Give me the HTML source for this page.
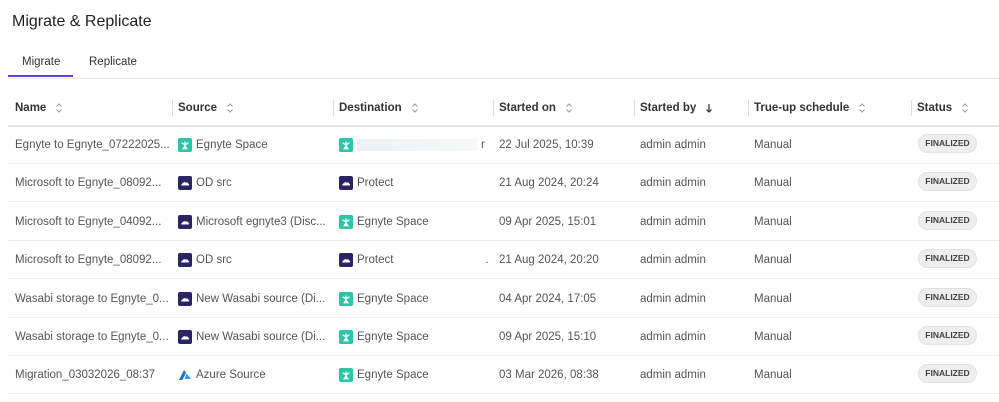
<!DOCTYPE html>
<html><head><meta charset="utf-8"><style>
*{margin:0;padding:0;box-sizing:border-box}
body{width:999px;height:402px;background:#fff;font-family:"Liberation Sans",sans-serif;color:#555;position:relative;overflow:hidden}
.abs{position:absolute}
h1{position:absolute;left:12px;top:13px;font-size:16px;font-weight:normal;color:#222}
.tab{position:absolute;top:55px;font-size:11.5px;color:#333;line-height:14px}
.th{position:absolute;top:101px;font-size:11.5px;font-weight:bold;color:#333;white-space:nowrap;line-height:14px}
.sep{position:absolute;top:100px;width:1px;height:16px;background:#ddd}
.cell{position:absolute;font-size:11.5px;color:#555;white-space:nowrap;line-height:14px;height:14px}
.ic{display:inline-block;width:14px;height:14px;border-radius:2px;vertical-align:top;margin-right:4px;position:relative}
.eg{background:#2ec4a6}
.ms{background:#2a2462}
.badge{position:absolute;left:918px;width:59px;height:19px;border-radius:10px;background:#eee;border:1px solid #e2e2e2;font-size:8.5px;font-weight:bold;color:#444;text-align:center;line-height:17px}
.line{position:absolute;left:8px;right:0;height:1px;background:#eee}
.srt{display:inline-block;vertical-align:top;margin-left:9px}
</style></head><body>
<h1>Migrate &amp; Replicate</h1>
<div class="tab" style="left:22px">Migrate</div>
<div class="tab" style="left:89px">Replicate</div>
<div class="abs" style="left:8px;top:75px;width:65px;height:2px;background:#6a3fd0"></div>
<div class="abs" style="left:8px;right:0;top:78px;height:1px;background:#e8e8e8"></div>
<div id="hd"></div>
<div class="abs" style="left:8px;right:0;top:125px;height:2px;background:#e4e4e4"></div>
<div id="rows"></div>
<script>
var S='<svg class="srt" width="8" height="14" viewBox="0 0 8 14"><path d="M1.5 5.5L4 3l2.5 2.5M1.5 8.5L4 11l2.5-2.5" stroke="#999" stroke-width="1" fill="none"/></svg>';
var D='<svg class="srt" width="8" height="14" viewBox="0 0 8 14"><path d="M4 3v8M1.5 8.5L4 11l2.5-2.5" stroke="#333" stroke-width="1.2" fill="none"/></svg>';
var H=[[15,"Name",S],[178,"Source",S],[339,"Destination",S],[499,"Started on",S],[640,"Started by",D],[754,"True-up schedule",S],[917,"Status",S]];
var hh='';H.forEach(function(x,i){if(i)hh+='<div class="sep" style="left:'+(x[0]-6)+'px"></div>';hh+='<div class="th" style="left:'+x[0]+'px">'+x[1]+x[2]+'</div>';});
document.getElementById('hd').innerHTML=hh;
var eg='<span class="ic eg"><svg width="14" height="14" viewBox="0 0 14 14" style="position:absolute;left:0;top:0"><g stroke="#fff" stroke-width="1.3" fill="none" stroke-linecap="round"><path d="M7 4v7M4 5l3 2 3-2M5 11l2-3 2 3"/></g></svg></span>';
var ms='<span class="ic ms"><svg width="14" height="14" viewBox="0 0 14 14" style="position:absolute;left:0;top:0"><path d="M3.5 9.5h7c.8 0 1-1.8-.3-1.9C10 6.3 8.5 6 7.8 6.8 7 5.6 5 6 5 7.3 3.6 7.2 3 9.5 3.5 9.5z" fill="#fff"/></svg></span>';
var az='<span class="ic"><svg width="14" height="14" viewBox="0 0 14 14" style="position:absolute;left:0;top:0"><path d="M6 2L1 12h3.5L8 4.5z" fill="#1a73c8"/><path d="M8.6 5.5L6.5 11H13z" fill="#3a9be0"/></svg></span>';
var blank='<span style="display:inline-block;width:120px;height:12px;vertical-align:top;margin-top:1px;background:linear-gradient(90deg,#eef1f3,#f7f8f8)"></span><span style="margin-left:4px">r</span>';
var R=[
["Egnyte to Egnyte_07222025...",eg+"Egnyte Space",eg+blank,"22 Jul 2025, 10:39"],
["Microsoft to Egnyte_08092...",ms+"OD src",ms+"Protect","21 Aug 2024, 20:24"],
["Microsoft to Egnyte_04092...",ms+"Microsoft egnyte3 (Disc...",eg+"Egnyte Space","09 Apr 2025, 15:01"],
["Microsoft to Egnyte_08092...",ms+"OD src",ms+"Protect<span style='margin-left:92px'>.</span>","21 Aug 2024, 20:20"],
["Wasabi storage to Egnyte_0...",ms+"New Wasabi source (Di...",eg+"Egnyte Space","04 Apr 2024, 17:05"],
["Wasabi storage to Egnyte_0...",ms+"New Wasabi source (Di...",eg+"Egnyte Space","09 Apr 2025, 15:10"],
["Migration_03032026_08:37",az+"Azure Source",eg+"Egnyte Space","03 Mar 2026, 08:38"]];
var h='';
R.forEach(function(r,i){var c=144+i*38.4,t=c-6;
h+='<div class="cell" style="left:15px;top:'+t+'px">'+r[0]+'</div>';
h+='<div class="cell" style="left:178px;top:'+t+'px">'+r[1]+'</div>';
h+='<div class="cell" style="left:339px;top:'+t+'px">'+r[2]+'</div>';
h+='<div class="cell" style="left:499px;top:'+t+'px">'+r[3]+'</div>';
h+='<div class="cell" style="left:640px;top:'+t+'px">admin admin</div>';
h+='<div class="cell" style="left:754px;top:'+t+'px">Manual</div>';
h+='<div class="badge" style="top:'+(c-10)+'px">FINALIZED</div>';
h+='<div class="line" style="top:'+(c+19)+'px"></div>';});
document.getElementById('rows').innerHTML=h;
</script>
</body></html>
